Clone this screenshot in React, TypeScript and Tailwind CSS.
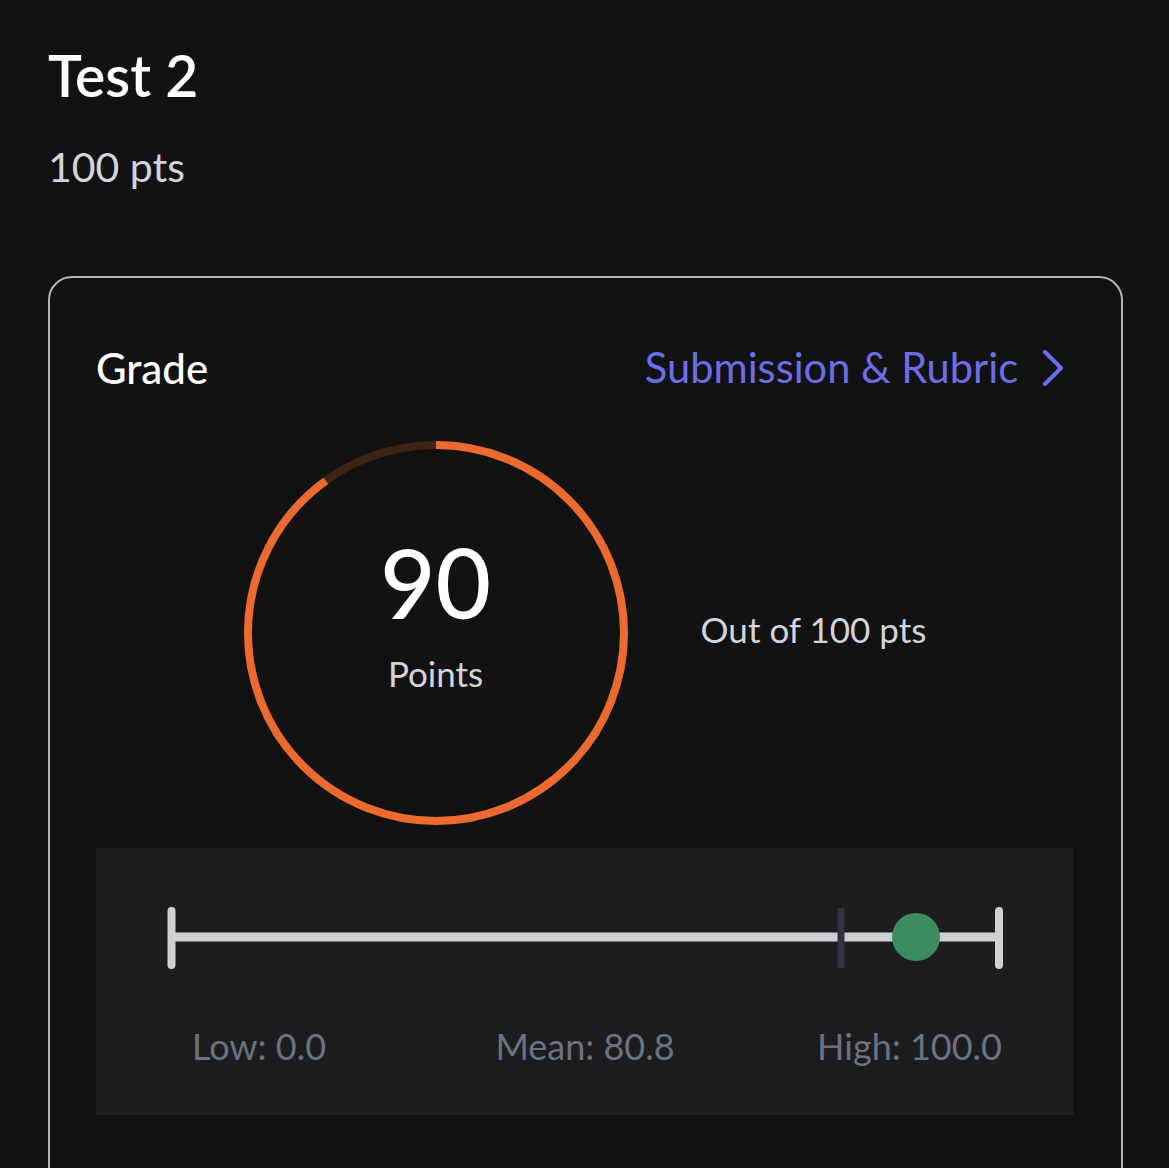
const ScoreRing = ({ score, total }: { score: number; total: number }) => {
  const r = 188;
  const c = 2 * Math.PI * r;
  const filled = (score / total) * c;
  return (
    <div className="relative w-[384px] h-[384px] shrink-0">
      <svg width="384" height="384" viewBox="0 0 384 384" className="absolute inset-0">
        <circle cx="192" cy="192" r={r} fill="none" stroke="#3e2316" strokeWidth="8" />
        <circle
          cx="192"
          cy="192"
          r={r}
          fill="none"
          stroke="#eb6a2f"
          strokeWidth="8"
          strokeDasharray={`${filled} ${c}`}
          transform="rotate(-90 192 192)"
        />
      </svg>
      <div className="absolute inset-0 flex flex-col items-center pt-[93px]">
        <span className="text-[96px] leading-none font-medium text-white">{score}</span>
        <span className="mt-[26px] text-[35px] leading-none text-[#d4d4d8]">Points</span>
      </div>
    </div>
  );
};

const RangeChart = () => (
  <svg width="978" height="130" viewBox="0 0 978 130" className="block">
    <line x1="75.5" y1="89" x2="903" y2="89" stroke="#cdd1d6" strokeWidth="9" />
    <line x1="75.5" y1="63" x2="75.5" y2="117" stroke="#cdd1d6" strokeWidth="8" strokeLinecap="round" />
    <line x1="903" y1="63" x2="903" y2="117" stroke="#cdd1d6" strokeWidth="8" strokeLinecap="round" />
    <line x1="745" y1="60" x2="745" y2="120" stroke="#2e3541" strokeWidth="7" />
    <circle cx="820" cy="89" r="24" fill="#3d8b61" />
  </svg>
);

export default function App() {
  return (
    <div
      className="min-h-[1168px] bg-[#121212] pl-[48px] pr-[46px] pt-[47px]"
      style={{ fontFamily: 'Lato, "Noto Sans", sans-serif' }}
    >
      <h1 className="text-[57px] leading-none font-semibold text-white">Test 2</h1>
      <p className="mt-[42px] text-[41px] leading-none text-[#d1d5db]">100 pts</p>

      <div className="mt-[89px] h-[940px] rounded-[24px] border-2 border-[#b5b5b5] pl-[46px] pr-[47px] pt-[69px]">
        <div className="flex items-center justify-between">
          <h2 className="text-[42px] leading-none font-medium text-white">Grade</h2>
          <a className="flex items-center gap-[24px] text-[41.6px] leading-none text-[#6c6ee9]">
            Submission &amp; Rubric
            <svg width="22" height="36" viewBox="0 0 22 36" className="mr-[10px]">
              <polyline
                points="3,2 19,18 3,34"
                fill="none"
                stroke="#6c6ee9"
                strokeWidth="4"
                strokeLinecap="round"
                strokeLinejoin="round"
              />
            </svg>
          </a>
        </div>

        <div className="mt-[52px] flex items-center justify-center gap-[73px]">
          <ScoreRing score={90} total={100} />
          <span className="mb-[8px] text-[35px] leading-none text-[#d1d5db]">Out of 100 pts</span>
        </div>

        <div className="mt-[23px] bg-[#1d1d1f] pb-[51px]">
          <RangeChart />
          <div className="mt-[50px] flex pl-[96px] pr-[72px] text-[36px] leading-none text-[#6b7280]">
            <span className="flex-1">Low: 0.0</span>
            <span className="mr-[24px]">Mean: 80.8</span>
            <span className="flex-1 text-right">High: 100.0</span>
          </div>
        </div>
      </div>
    </div>
  );
}
